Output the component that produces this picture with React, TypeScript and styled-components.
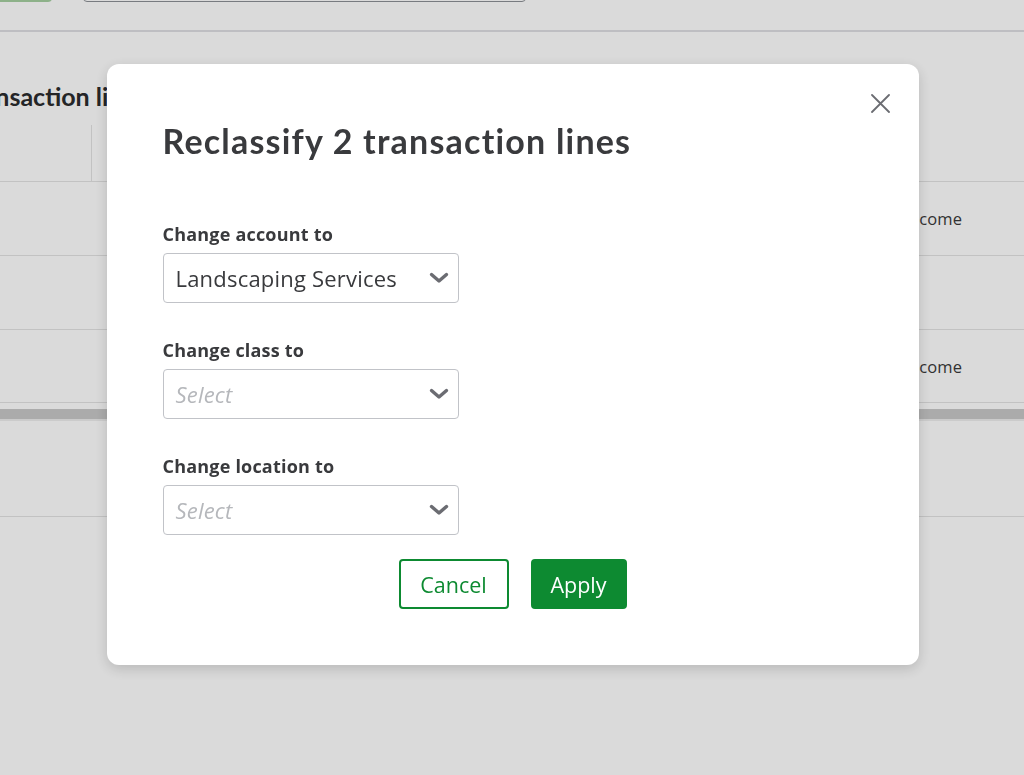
import React from 'react';
import styled, { createGlobalStyle } from 'styled-components';

const GlobalStyle = createGlobalStyle`
    html, body {
        margin: 0;
        padding: 0;
        background: #ffffff;
        font-family: Lato, "Open Sans", sans-serif;
        color: #393a3d;
        overflow: hidden;
    }
`;

/* ---------- page behind the dialog ---------- */

const Page = styled.div`
    width: 1024px;
    height: 775px;
    overflow: hidden;
`;
const Toolbar = styled.div`
    display: flex;
    gap: 31px;
    height: 36px;
    margin-top: -34px;
`;
const NewButton = styled.div`
    width: 52px;
    height: 36px;
    background: #a5d0a1;
    border-radius: 0 0 4px 0;
`;
const SearchBox = styled.div`
    width: 441px;
    height: 34px;
    border: 1px solid #8d9096;
    border-radius: 4px;
`;
const Rule = styled.div`
    height: 2px;
    margin-top: 28px;
    background: #dfdfe3;
`;
const Heading = styled.h2`
    margin: 48px 0 13px -39px;
    font-size: 25px;
    line-height: 32px;
    font-weight: 700;
    color: #2b2c2e;
    white-space: nowrap;
`;
const Row = styled.div<{ $height: number }>`
    display: grid;
    grid-template-columns: 92px 812px 1fr;
    height: ${p => p.$height}px;
    border-bottom: 1px solid #e3e3e3;
    box-sizing: border-box;
`;
const HeadCell = styled.div<{ $divider?: boolean }>`
    border-right: ${p => (p.$divider ? '1px solid #e3e3e3' : 'none')};
`;
const AccountCell = styled.div`
    display: flex;
    align-items: center;
    font-family: "Open Sans", sans-serif;
    font-size: 16.5px;
    letter-spacing: 0.2px;
    color: #3a3a3a;
    white-space: nowrap;
`;
const ScrollTrack = styled.div`
    margin-top: 6px;
    height: 10px;
    background: #c9c9c9;
    border-bottom: 2px solid #eeeeee;
`;
const FooterRow = styled.div`
    height: 95px;
    border-bottom: 1px solid #e3e3e3;
`;

/* ---------- dialog ---------- */

const Overlay = styled.div`
    position: fixed;
    inset: 0;
    background: rgba(0, 0, 0, 0.145);
    display: flex;
    justify-content: center;
    align-items: flex-start;
    padding: 64px 0 0 1px;
`;
const Dialog = styled.div`
    position: relative;
    width: 812px;
    box-sizing: border-box;
    padding: 57px 56px 56px;
    background: #ffffff;
    border-radius: 12px;
    box-shadow: 0 4px 14px rgba(0, 0, 0, 0.16);
`;
const CloseButton = styled.button`
    position: absolute;
    top: 29px;
    right: 28px;
    width: 21px;
    height: 21px;
    padding: 0;
    border: none;
    background: none;
    cursor: pointer;
    display: flex;
    align-items: center;
    justify-content: center;
`;
const Title = styled.h1`
    margin: 0 0 61px;
    font-size: 34px;
    line-height: 40px;
    font-weight: 700;
    letter-spacing: 1.2px;
    color: #393a3d;
`;
const Field = styled.div`
    display: flex;
    flex-direction: column;
    & + & {
        margin-top: 35px;
    }
`;
const Label = styled.label`
    font-family: "Open Sans", sans-serif;
    font-size: 18px;
    line-height: 24px;
    font-weight: 700;
    letter-spacing: 0.2px;
    color: #393a3d;
    margin-bottom: 7px;
`;
const SelectBox = styled.div`
    width: 296px;
    height: 50px;
    box-sizing: border-box;
    display: flex;
    align-items: center;
    justify-content: space-between;
    padding: 0 9px 0 12px;
    border: 1px solid #c1c3c8;
    border-radius: 4px;
    background: #fff;
`;
const SelectValue = styled.span<{ $placeholder?: boolean }>`
    font-family: "Open Sans", sans-serif;
    font-size: 22px;
    letter-spacing: 0.2px;
    font-style: ${p => (p.$placeholder ? 'italic' : 'normal')};
    color: ${p => (p.$placeholder ? '#b5b7bb' : '#393a3d')};
    white-space: nowrap;
`;
const Actions = styled.div`
    display: flex;
    justify-content: center;
    gap: 22px;
    margin-top: 24px;
`;
const ActionButton = styled.button<{ $primary?: boolean }>`
    height: 50px;
    box-sizing: border-box;
    padding: 0 ${p => (p.$primary ? 12 : 16)}px;
    min-width: ${p => (p.$primary ? 96 : 110)}px;
    border: 2px solid #0d8a31;
    border-radius: 4px;
    background: ${p => (p.$primary ? '#0d8a31' : '#ffffff')};
    color: ${p => (p.$primary ? '#ffffff' : '#0d8a31')};
    font-family: "Open Sans", sans-serif;
    font-size: 21.5px;
    cursor: pointer;
`;

const Chevron = () => (
    <svg width="20" height="12" viewBox="0 0 20 12">
        <path d="M2.5 2.5 L10 9 L17.5 2.5" fill="none" stroke="#6b6c72" strokeWidth="3.4" strokeLinecap="round" strokeLinejoin="round" />
    </svg>
);

const CloseIcon = () => (
    <svg width="19" height="19" viewBox="0 0 19 19">
        <path d="M1 1 L18 18 M18 1 L1 18" stroke="#6b6c72" strokeWidth="1.8" strokeLinecap="round" />
    </svg>
);

function SelectField(props: { label: string; value?: string }) {
    return (
        <Field>
            <Label>{props.label}</Label>
            <SelectBox>
                <SelectValue $placeholder={!props.value}>{props.value || 'Select'}</SelectValue>
                <Chevron />
            </SelectBox>
        </Field>
    );
}

function App() {
    return (
        <>
            <GlobalStyle />
            <Page>
                <Toolbar>
                    <NewButton />
                    <SearchBox />
                </Toolbar>
                <Rule />
                <Heading>Transaction lines</Heading>
                <Row $height={57}>
                    <HeadCell $divider />
                    <HeadCell />
                    <HeadCell />
                </Row>
                <Row $height={74}>
                    <div />
                    <div />
                    <AccountCell>Income</AccountCell>
                </Row>
                <Row $height={74}>
                    <div />
                    <div />
                    <div />
                </Row>
                <Row $height={73}>
                    <div />
                    <div />
                    <AccountCell>Income</AccountCell>
                </Row>
                <ScrollTrack />
                <FooterRow />
            </Page>
            <Overlay>
                <Dialog>
                    <CloseButton aria-label="Close">
                        <CloseIcon />
                    </CloseButton>
                    <Title>Reclassify 2 transaction lines</Title>
                    <SelectField label="Change account to" value="Landscaping Services" />
                    <SelectField label="Change class to" />
                    <SelectField label="Change location to" />
                    <Actions>
                        <ActionButton>Cancel</ActionButton>
                        <ActionButton $primary>Apply</ActionButton>
                    </Actions>
                </Dialog>
            </Overlay>
        </>
    );
}

export default App;
